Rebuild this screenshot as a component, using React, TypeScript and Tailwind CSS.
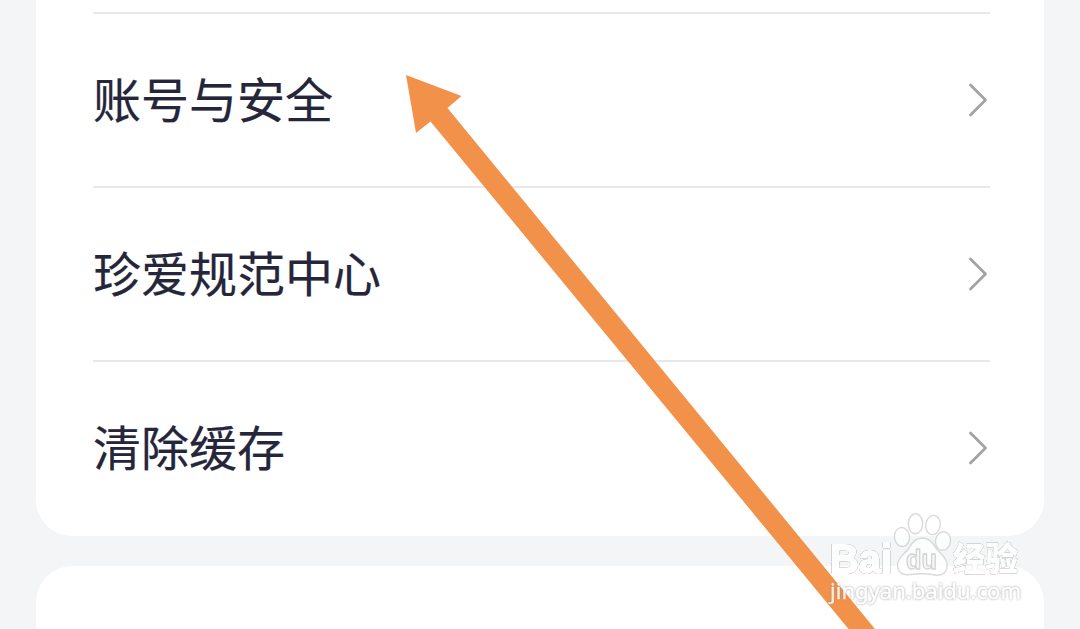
interface SettingRowProps {
  label: string
}

const settings = ["账号与安全", "珍爱规范中心", "清除缓存"]

function SettingRow({ label }: SettingRowProps) {
  return (
    <li className="flex h-[174px] items-center justify-between border-t-2 border-[#e8e8e8]">
      <span className="pb-1.5 text-5xl leading-none text-[#25263a] [-webkit-text-stroke:0.2px_#25263a]">{label}</span>
      <svg className="mr-0.5 h-9 w-5" viewBox="0 0 20 36" fill="none">
        <path d="M2.500 3L17.500 18L2.500 33" stroke="#a3a3a3" strokeWidth="2.800" strokeLinecap="round" strokeLinejoin="round" />
      </svg>
    </li>
  )
}

function Arrow() {
  return (
    <svg className="pointer-events-none absolute inset-0" width="1080" height="629" viewBox="0 0 1080 629">
      <path d="M406 75L461.500 96L447.500 108L875 629H848.500L430.500 121.500L416 133Z" fill="#f2924a" />
    </svg>
  )
}

function Watermark() {
  return (
    <svg
      className="pointer-events-none absolute top-[508px] left-[824px] opacity-80"
      width="204"
      height="104"
      viewBox="0 0 204 104"
      fill="#ffffff"
      strokeLinejoin="round"
    >
      <g stroke="#d2d2d2" strokeWidth="1.400">
        <ellipse cx="78" cy="29" rx="7.500" ry="9.500" transform="rotate(-8 78 29)" />
        <ellipse cx="91.500" cy="15.800" rx="7.200" ry="10" />
        <ellipse cx="109" cy="17" rx="7.300" ry="9.700" transform="rotate(10 109 17)" />
        <ellipse cx="119" cy="33" rx="7.500" ry="9.300" transform="rotate(8 119 33)" />
        <path d="M98.500 30C92 30 88 34 85 40C81 46 73.500 49 73.500 57C73.500 65 79 67.500 86 66.500C94 65.500 103 65.500 111 67C118 68 123 65 123 57C123 49 116 46 112 40C108 34 105 30 98.500 30Z" />
      </g>
      <g stroke="#ffffff" className="[filter:drop-shadow(0_0_0.7px_#888)_drop-shadow(0_0_0.7px_#aaa)]">
        <text x="6" y="64.500" fontSize="41" fontWeight="700" strokeWidth="2" textLength="62" lengthAdjust="spacingAndGlyphs" className="font-['Liberation_Sans',sans-serif]">
          Bai
        </text>
        <text x="129" y="62.500" fontSize="33" fontWeight="900" strokeWidth="0.600" textLength="65" lengthAdjust="spacingAndGlyphs" className="font-['Noto_Sans_CJK_SC',sans-serif]">
          经验
        </text>
      </g>
      <text x="82" y="61" fontSize="27" fontWeight="700" fill="#f7f7f7" stroke="#cacaca" strokeWidth="1.300" textLength="31" lengthAdjust="spacingAndGlyphs" className="font-['Liberation_Sans',sans-serif]">
        du
      </text>
      <text x="6" y="91" fontSize="22" stroke="#ffffff" strokeWidth="0.400" textLength="191" lengthAdjust="spacingAndGlyphs" className="font-['Noto_Sans',sans-serif] [filter:drop-shadow(0_0_0.8px_#888)]">
        jingyan.baidu.com
      </text>
    </svg>
  )
}

export default function App() {
  return (
    <main className="relative flex h-[629px] w-[1080px] flex-col gap-[30px] overflow-hidden bg-[#f3f5f7] px-9 font-['Noto_Sans_CJK_SC',sans-serif]">
      <section className="h-[536px] shrink-0 rounded-b-[36px] bg-white pt-3 pr-[54px] pl-[57px]">
        <ul>
          {settings.map((label) => (
            <SettingRow key={label} label={label} />
          ))}
        </ul>
      </section>
      <section className="grow rounded-t-[36px] bg-white" />
      <Arrow />
      <Watermark />
    </main>
  )
}
